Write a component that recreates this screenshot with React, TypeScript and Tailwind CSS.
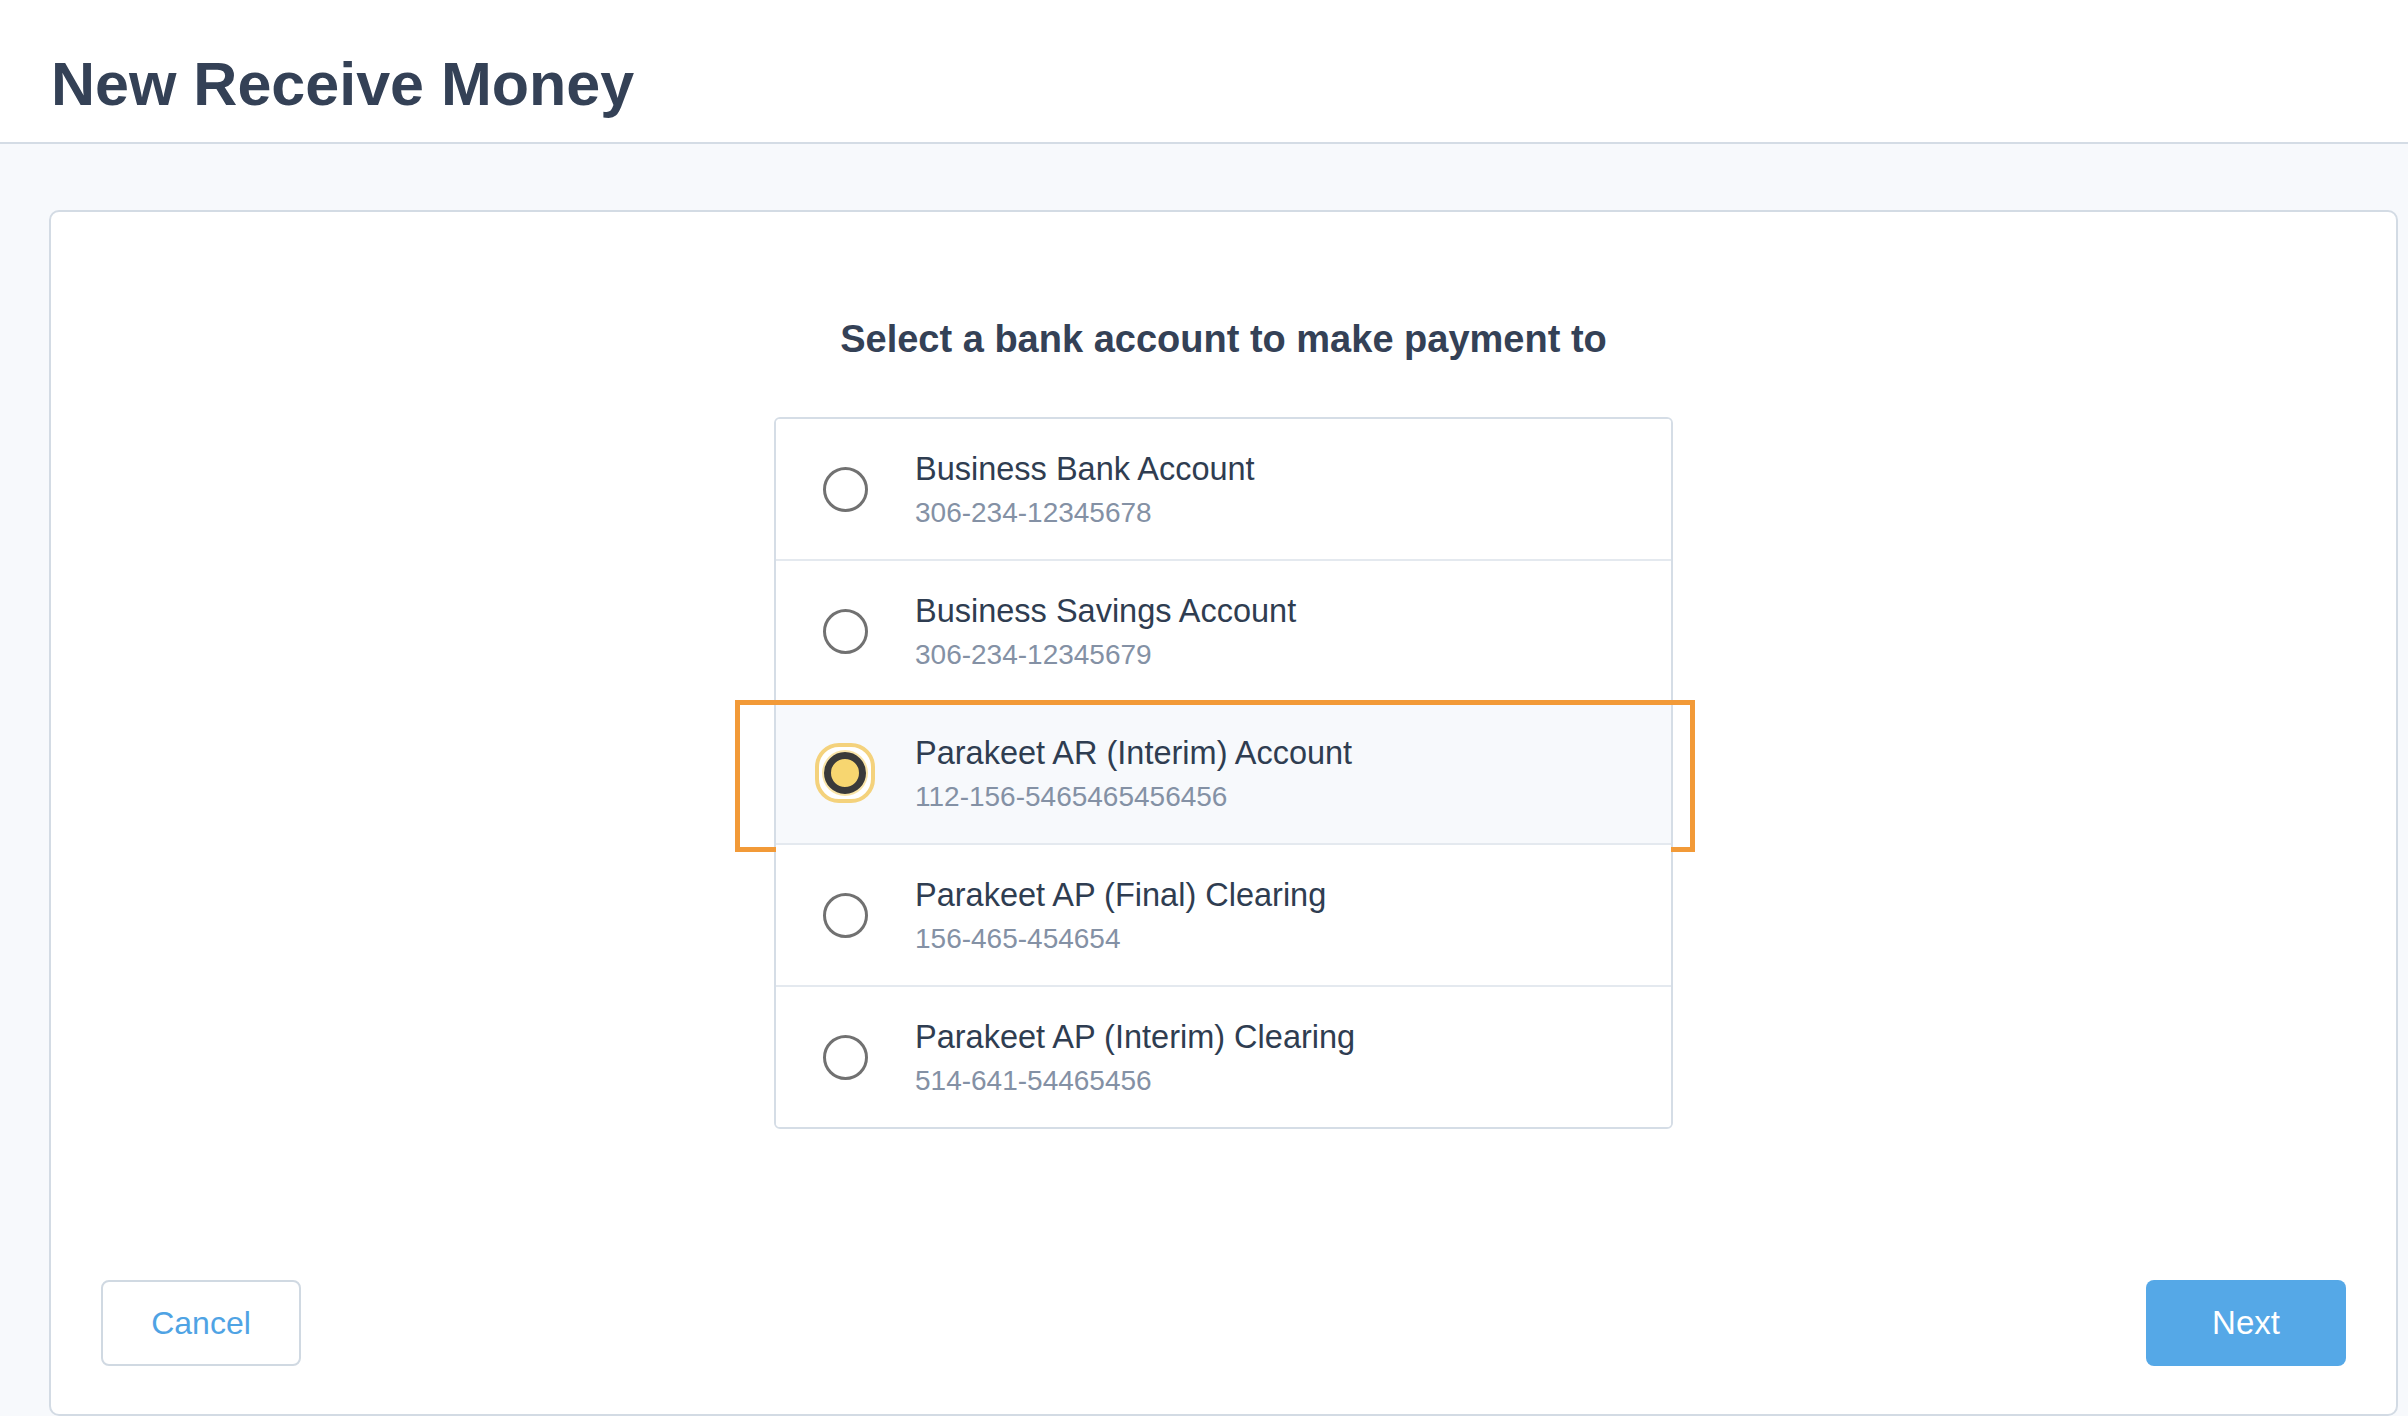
import { useState } from 'react';

type Account = {
  name: string;
  number: string;
};

const accounts: Account[] = [
  { name: 'Business Bank Account', number: '306-234-12345678' },
  { name: 'Business Savings Account', number: '306-234-12345679' },
  { name: 'Parakeet AR (Interim) Account', number: '112-156-5465465456456' },
  { name: 'Parakeet AP (Final) Clearing', number: '156-465-454654' },
  { name: 'Parakeet AP (Interim) Clearing', number: '514-641-54465456' },
];

const Radio = ({ checked }: { checked: boolean }) => (
  <div className="flex h-[60px] w-[60px] shrink-0 items-center justify-center">
    {checked ? (
      <div className="flex h-[60px] w-[60px] items-center justify-center rounded-[24px] border-4 border-[#f4d27c] bg-white">
        <div className="h-[42px] w-[42px] rounded-full border-[7px] border-[#3a3a3a] bg-[#f7d670] shadow-[0_0_0_2px_#f9e4a8]" />
      </div>
    ) : (
      <div className="h-[45px] w-[45px] rounded-full border-[3px] border-[#717171]" />
    )}
  </div>
);

const App = () => {
  const [selected, setSelected] = useState(2);

  return (
    <div className="min-h-[1416px] bg-[#f7f9fc] font-['Liberation_Sans',Arial,sans-serif]">
      <header className="border-b-2 border-[#d4dce5] bg-white pb-[22px] pl-[51px] pt-[48px]">
        <h1 className="text-[61px] font-bold leading-[72px] text-[#344156]">New Receive Money</h1>
      </header>

      <main className="ml-[49px] mr-[10px] mt-[66px]">
        <div className="flex h-[1206px] flex-col rounded-[10px] border-2 border-[#d3dbe4] bg-white px-[50px] pb-[48px] pt-[104px]">
          <h2 className="text-center text-[38px] font-bold leading-[46px] text-[#344156]">
            Select a bank account to make payment to
          </h2>

          <div className="mx-auto mt-[55px] w-[899px] overflow-visible rounded-[6px] border-2 border-[#d5dde6]">
            {accounts.map((acc, i) => {
              const checked = i === selected;
              const last = i === accounts.length - 1;
              return (
                <button
                  key={acc.number}
                  type="button"
                  onClick={() => setSelected(i)}
                  className={`relative flex w-full items-center pl-[39px] text-left ${
                    last ? 'h-[140px] rounded-b-[4px]' : 'h-[142px] border-b-2 border-[#e4e9ef]'
                  } ${i === 0 ? 'rounded-t-[4px]' : ''} ${checked ? 'bg-[#f7f9fc]' : 'bg-white'}`}
                >
                  <Radio checked={checked} />
                  <div className="ml-[40px] flex flex-col gap-[6px] pt-[2px]">
                    <span className="text-[32.5px] leading-[40px] text-[#2f3d51]">{acc.name}</span>
                    <span className="text-[28px] leading-[36px] text-[#8491a5]">{acc.number}</span>
                  </div>
                  {checked && (
                    <div className="pointer-events-none absolute -bottom-[9px] -left-[41px] -right-[24px] -top-[3px] border-[5px] border-[#f29a38]" />
                  )}
                </button>
              );
            })}
          </div>

          <div className="mt-auto flex items-center justify-between">
            <button
              type="button"
              className="flex h-[86px] w-[200px] items-center justify-center rounded-[8px] border-2 border-[#d0d9e2] bg-white text-[32px] text-[#4fa3e4]"
            >
              Cancel
            </button>
            <button
              type="button"
              className="flex h-[86px] w-[200px] items-center justify-center rounded-[8px] bg-[#55a8e7] text-[33px] text-white"
            >
              Next
            </button>
          </div>
        </div>
      </main>
    </div>
  );
};

export default App;
